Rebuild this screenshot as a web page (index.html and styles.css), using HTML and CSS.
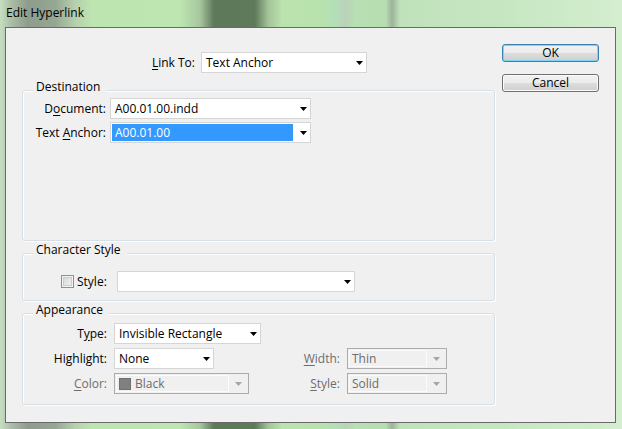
FILE: index.html
```html
<!DOCTYPE html>
<html>
<head>
<meta charset="utf-8">
<title>Edit Hyperlink</title>
<link rel="stylesheet" href="styles.css">
</head>
<body>
<div class="window">
  <div class="titlebar">Edit Hyperlink</div>
  <div class="client">
    <div class="main">
      <div class="link-row">
        <span class="lbl link-lbl"><u>L</u>ink To:</span>
        <div class="combo w-link">
          <span class="val">Text Anchor</span>
          <span class="arrow"><svg width="7" height="4" viewBox="0 0 7 4"><polygon points="0,0 7,0 3.5,4"/></svg></span>
        </div>
      </div>

      <div class="group dest">
        <div class="legend">Destination</div>
        <div class="dest-grid">
          <span class="lbl">D<u>o</u>cument:</span>
          <div class="combo w-dest">
            <span class="val">A00.01.00.indd</span>
            <span class="arrow"><svg width="7" height="4" viewBox="0 0 7 4"><polygon points="0,0 7,0 3.5,4"/></svg></span>
          </div>
          <span class="lbl">Text <u>A</u>nchor:</span>
          <div class="combo w-dest">
            <span class="val sel">A00.01.00</span>
            <span class="arrow wide"><svg width="7" height="4" viewBox="0 0 7 4"><polygon points="0,0 7,0 3.5,4"/></svg></span>
          </div>
        </div>
      </div>

      <div class="group charstyle">
        <div class="legend">Character Style</div>
        <div class="char-row">
          <span class="check"></span>
          <span class="char-lbl">Style:</span>
          <div class="combo w-style">
            <span class="val"></span>
            <span class="arrow"><svg width="7" height="4" viewBox="0 0 7 4"><polygon points="0,0 7,0 3.5,4"/></svg></span>
          </div>
        </div>
      </div>

      <div class="group appearance">
        <div class="legend">Appearance</div>
        <div class="app-grid">
          <span class="lbl">T<u>y</u>pe:</span>
          <div class="combo w-type">
            <span class="val">Invisible Rectangle</span>
            <span class="arrow"><svg width="7" height="4" viewBox="0 0 7 4"><polygon points="0,0 7,0 3.5,4"/></svg></span>
          </div>
          <span></span>
          <span></span>

          <span class="lbl">Hi<u>g</u>hlight:</span>
          <div class="combo w-high">
            <span class="val">None</span>
            <span class="arrow"><svg width="7" height="4" viewBox="0 0 7 4"><polygon points="0,0 7,0 3.5,4"/></svg></span>
          </div>
          <span class="lbl dis"><u>W</u>idth:</span>
          <div class="combo disabled w-small">
            <span class="val">Thin</span>
            <span class="arrow"><svg width="7" height="4" viewBox="0 0 7 4"><polygon points="0,0 7,0 3.5,4"/></svg></span>
          </div>

          <span class="lbl dis"><u>C</u>olor:</span>
          <div class="combo disabled w-color">
            <span class="val"><span class="swatch"></span>Black</span>
            <span class="arrow"><svg width="7" height="4" viewBox="0 0 7 4"><polygon points="0,0 7,0 3.5,4"/></svg></span>
          </div>
          <span class="lbl dis"><u>S</u>tyle:</span>
          <div class="combo disabled w-small">
            <span class="val">Solid</span>
            <span class="arrow"><svg width="7" height="4" viewBox="0 0 7 4"><polygon points="0,0 7,0 3.5,4"/></svg></span>
          </div>
        </div>
      </div>
    </div>

    <div class="buttons">
      <div class="btn default">OK</div>
      <div class="btn">Cancel</div>
    </div>
  </div>
</div>
</body>
</html>
```

FILE: styles.css
```css
* { box-sizing: border-box; }
html, body { margin: 0; padding: 0; }
body {
  width: 622px;
  height: 429px;
  overflow: hidden;
  font-family: "Open Sans", "Noto Sans", sans-serif;
  font-size: 12px;
  color: #000;
  background: linear-gradient(to right,
    #c6dfc1 0px, #a9bca6 12px, #8e9c8c 28px, #95a792 55px, #b6cfae 75px,
    #bde5b1 92px, #bde6b0 180px, #a7c69f 200px, #5e785a 214px, #5e7a5a 255px,
    #a2c398 268px, #bbe3ad 282px, #b8e2ac 320px, #b3dfb8 335px, #bbd2b8 346px,
    #b8e0b4 356px, #b5ddb0 386px, #9db39a 392px, #c0e2bb 400px, #c6e6c1 500px,
    #d4eecf 622px);
}
.window {
  height: 429px;
  padding-left: 5px;
}
.titlebar {
  height: 27px;
  padding-left: 1px;
  line-height: 26px;
  font-size: 12px;
  color: #000;
}
.client {
  width: 611px;
  height: 396px;
  border: 1px solid #6a6a6a;
  background: #f0f0f0;
  display: flex;
  align-items: flex-start;
}
.main {
  width: 473px;
  margin: 24px 0 0 16px;
}
.lbl {
  text-align: right;
  white-space: nowrap;
  line-height: 16px;
}
.lbl.dis { color: #6d6d6d; }
u { text-decoration: underline; text-underline-offset: 2px; }

.link-row {
  display: flex;
  align-items: center;
}
.link-lbl { width: 173px; margin-right: 6px; }

.combo {
  height: 21px;
  border: 1px solid #d5d5d5;
  background: #fff;
  display: flex;
  align-items: center;
}
.combo .val {
  flex: 1;
  min-width: 0;
  padding-left: 4px;
  white-space: nowrap;
  line-height: 16px;
}
.combo .val.sel {
  align-self: stretch;
  margin: 1px 0 1px 1px;
  padding-left: 3px;
  background: #3399ff;
  color: #fff;
  display: flex;
  align-items: center;
}
.combo .arrow {
  width: 14px;
  flex: none;
  display: flex;
  justify-content: center;
  align-items: center;
}
.combo .arrow.wide { width: 17px; padding-left: 3px; }
.combo .arrow svg { display: block; fill: #000; }
.combo.disabled {
  border-color: #acacac;
  background: #f0f0f0;
  color: #6d6d6d;
  padding: 1px;
}
.combo.disabled .val {
  align-self: stretch;
  display: flex;
  align-items: center;
  border: 1px solid #fbfbfb;
  padding-left: 2px;
}
.combo.disabled .arrow { width: 18px; }
.combo.disabled .arrow svg { fill: #a5a5a5; }
.swatch {
  width: 12px;
  height: 12px;
  background: #808080;
  border: 1px solid #707070;
  margin-right: 4px;
  flex: none;
}

.w-link { width: 166px; }
.w-dest { width: 201px; }
.w-style { width: 238px; }
.w-type { width: 147px; }
.w-high { width: 100px; }
.w-color { width: 135px; }
.w-small { width: 100px; }

.group {
  border: 1px solid #d5dfe5;
  border-radius: 3px;
  box-shadow: 1px 1px 0 #fff, inset 1px 1px 0 #fff;
}
.legend {
  width: max-content;
  margin: -11px 0 0 10px;
  padding: 0 6px 0 3px;
  line-height: 14px;
  background: #f0f0f0;
}
.dest {
  margin-top: 17px;
  height: 151px;
}
.dest-grid {
  display: grid;
  grid-template-columns: 83px 201px;
  column-gap: 4px;
  row-gap: 3px;
  align-items: center;
  margin-top: 4px;
}
.charstyle {
  margin-top: 12px;
  height: 48px;
}
.char-row {
  display: flex;
  align-items: center;
  margin-top: 14px;
  padding-left: 38px;
}
.check {
  width: 13px;
  height: 13px;
  border: 1px solid #8e8f8f;
  background: linear-gradient(135deg, #d0d3d7, #f7f7f7);
  box-shadow: inset 0 0 0 1px #f4f4f4, inset 0 0 0 2px #c9ccd1;
  margin-right: 3px;
  flex: none;
}
.char-lbl { width: 40px; line-height: 16px; }
.appearance {
  margin-top: 12px;
  height: 92px;
}
.app-grid {
  display: grid;
  grid-template-columns: 84px 147px 72px 100px;
  column-gap: 7px;
  row-gap: 4px;
  align-items: center;
  justify-items: start;
  margin-top: 6px;
}
.app-grid .lbl { justify-self: end; }

.buttons {
  margin: 16px 0 0 7px;
  display: flex;
  flex-direction: column;
  gap: 12px;
}
.btn {
  width: 97px;
  height: 18px;
  border: 1px solid #707070;
  border-radius: 3px;
  background: linear-gradient(#f2f2f2 0%, #ebebeb 50%, #dddddd 50%, #cfcfcf 100%);
  box-shadow: inset 0 0 0 1px #fbfbfb;
  text-align: center;
  line-height: 15px;
}
.btn.default {
  border-color: #3c7fb1;
  box-shadow: inset 0 0 0 1px #7fd3f5;
}
```
